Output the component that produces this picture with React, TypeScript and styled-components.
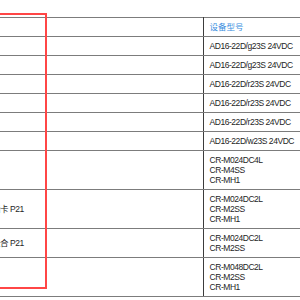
import React from "react";
import styled, { createGlobalStyle } from "styled-components";

const Global = createGlobalStyle`
  html, body { margin: 0; padding: 0; background: #fff; }
  body { width: 300px; height: 300px; overflow: hidden; }
`;

const Page = styled.div`
  position: relative;
  width: 300px;
  height: 300px;
  overflow: hidden;
  padding-top: 17px;
  box-sizing: border-box;
  font-family: "Liberation Sans", "Noto Sans CJK SC", sans-serif;
  font-size: 8.5px;
  color: #1e1e1e;
`;

const Table = styled.table`
  border-collapse: collapse;
  margin-left: -14px;
  width: 340px;
  table-layout: fixed;
  border-top: 1px solid #7c7c7c;
`;

const Cell = styled.td<{ $right?: boolean }>`
  padding: 4px 6px;
  line-height: 10px;
  vertical-align: middle;
  border-bottom: 1px solid #7c7c7c;
  border-left: ${(p) => (p.$right ? "1px solid #3c3c3c" : "none")};
  letter-spacing: -0.45px;
  white-space: nowrap;
  overflow: hidden;
`;

const Head = styled.span`
  color: #3d8fe0;
  letter-spacing: 0;
`;

const Line = styled.div``;

const Mark = styled.div`
  position: absolute;
  left: -10px;
  top: 13px;
  width: 53px;
  height: 272px;
  border: 2px solid #ff4646;
  pointer-events: none;
`;

const rows: { left?: string; right: string[] }[] = [
  { right: ["AD16-22D/g23S 24VDC"] },
  { right: ["AD16-22D/g23S 24VDC"] },
  { right: ["AD16-22D/r23S 24VDC"] },
  { right: ["AD16-22D/r23S 24VDC"] },
  { right: ["AD16-22D/r23S 24VDC"] },
  { right: ["AD16-22D/w23S 24VDC"] },
  { right: ["CR-M024DC4L", "CR-M4SS", "CR-MH1"] },
  { left: "插卡 P21", right: ["CR-M024DC2L", "CR-M2SS", "CR-MH1"] },
  { left: "组合 P21", right: ["CR-M024DC2L", "CR-M2SS"] },
  { right: ["CR-M048DC2L", "CR-M2SS", "CR-MH1"] },
];

export default function App() {
  return (
    <>
      <Global />
      <Page>
        <Table>
          <colgroup>
            <col style={{ width: 217 }} />
            <col style={{ width: 123 }} />
          </colgroup>
          <tbody>
            <tr>
              <Cell />
              <Cell $right>
                <Head>设备型号</Head>
              </Cell>
            </tr>
            {rows.map((r, i) => (
              <tr key={i}>
                <Cell>{r.left ?? ""}</Cell>
                <Cell $right>
                  {r.right.map((t, j) => (
                    <Line key={j}>{t}</Line>
                  ))}
                </Cell>
              </tr>
            ))}
          </tbody>
        </Table>
        <Mark />
      </Page>
    </>
  );
}
